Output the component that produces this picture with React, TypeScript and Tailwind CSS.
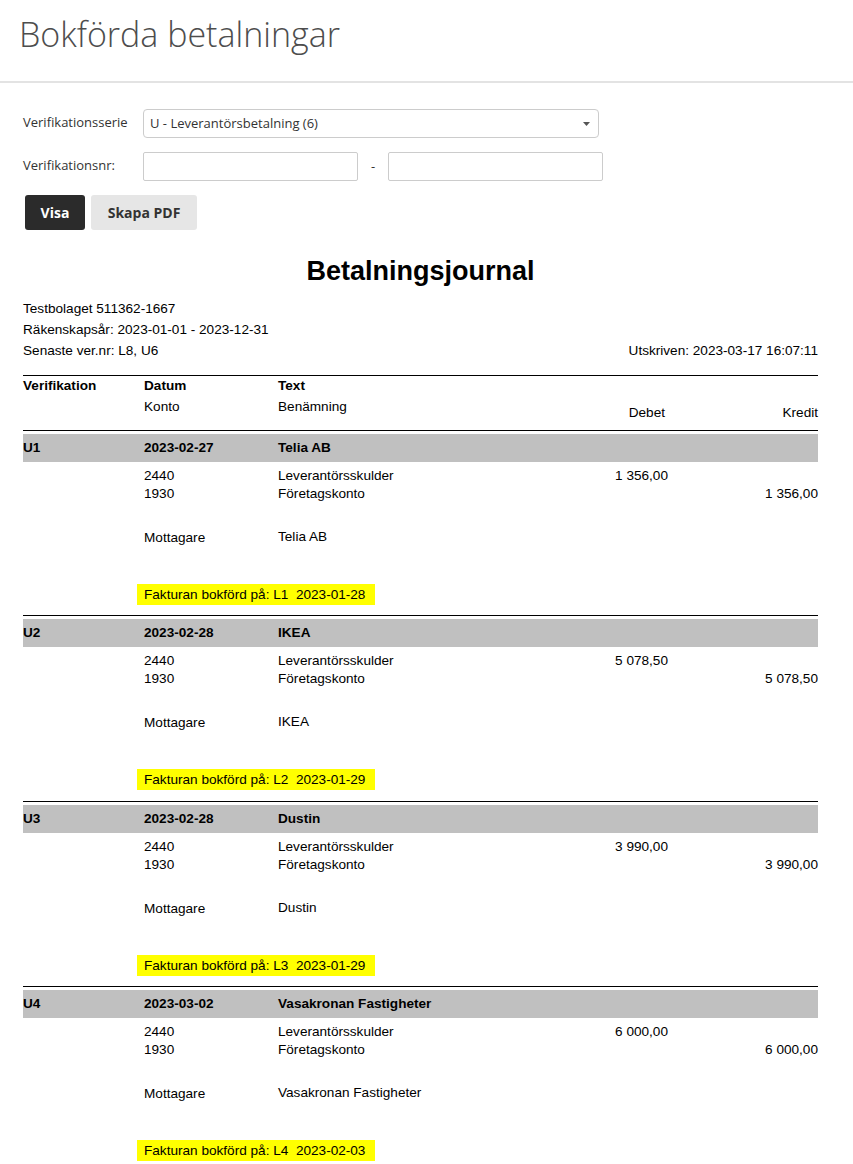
import React from "react";

type Voucher = {
  id: string;
  date: string;
  name: string;
  amount: string;
  invoice: string;
  invoiceDate: string;
};

const vouchers: Voucher[] = [
  { id: "U1", date: "2023-02-27", name: "Telia AB", amount: "1 356,00", invoice: "L1", invoiceDate: "2023-01-28" },
  { id: "U2", date: "2023-02-28", name: "IKEA", amount: "5 078,50", invoice: "L2", invoiceDate: "2023-01-29" },
  { id: "U3", date: "2023-02-28", name: "Dustin", amount: "3 990,00", invoice: "L3", invoiceDate: "2023-01-29" },
  { id: "U4", date: "2023-03-02", name: "Vasakronan Fastigheter", amount: "6 000,00", invoice: "L4", invoiceDate: "2023-02-03" },
];

const cols = "grid grid-cols-[121px_134px_240px_150px_150px]";

function VoucherBlock({ v }: { v: Voucher }) {
  return (
    <div className="border-t border-black pb-[10px]">
      <div className={`${cols} mt-[3px] h-[28px] items-center bg-[#c0c0c0] font-bold`}>
        <div>{v.id}</div>
        <div>{v.date}</div>
        <div>{v.name}</div>
      </div>
      <div className="pt-[5px] leading-[18px]">
        <div className={cols}>
          <div />
          <div>2440</div>
          <div>Leverantörsskulder</div>
          <div className="text-right">{v.amount}</div>
          <div />
        </div>
        <div className={cols}>
          <div />
          <div>1930</div>
          <div>Företagskonto</div>
          <div />
          <div className="text-right">{v.amount}</div>
        </div>
      </div>
      <div className={`${cols} mt-[26px] leading-[18px]`}>
        <div />
        <div>Mottagare</div>
        <div className="-mt-[1px]">{v.name}</div>
      </div>
      <div className={`${cols} mt-[37px]`}>
        <div />
        <div className="col-span-3">
          <span className="-ml-[7px] inline-block h-[21px] whitespace-pre bg-[#ffff00] pl-[7px] pr-[10px] leading-[21px]">
            {`Fakturan bokförd på: ${v.invoice}  ${v.invoiceDate}`}
          </span>
        </div>
      </div>
    </div>
  );
}

export default function App() {
  return (
    <div className="min-h-[1164px] w-[853px] bg-white">
      <header className="border-b-2 border-[#e3e3e3] px-[19px] pb-[27px] pt-[14px]">
        <h1 className="font-['Open_Sans',sans-serif] text-[34px] font-light leading-[40px] text-[#4d4d4d]">
          Bokförda betalningar
        </h1>
      </header>

      <section className="pl-[23px] pt-[26px] font-['Open_Sans',sans-serif] text-[13px] text-[#333]">
        <div className="flex items-center">
          <label className="w-[120px] -mt-[2px]">Verifikationsserie</label>
          <div className="flex h-[29px] w-[456px] items-center justify-between rounded-[4px] border border-[#ccc] pl-[6px] pr-[8px]">
            <span>U - Leverantörsbetalning (6)</span>
            <svg width="7" height="4" viewBox="0 0 7 4" className="mt-[1px]">
              <path d="M0 0h7L3.5 4z" fill="#555" />
            </svg>
          </div>
        </div>
        <div className="mt-[14px] flex items-center">
          <label className="w-[120px] -mt-[2px]">Verifikationsnr:</label>
          <div className="h-[29px] w-[215px] rounded-[2px] border border-[#ccc]" />
          <span className="w-[30px] text-center">-</span>
          <div className="h-[29px] w-[215px] rounded-[2px] border border-[#ccc]" />
        </div>
        <div className="mt-[14px] flex gap-[6px] pl-[2px]">
          <button className="h-[35px] w-[60px] rounded-[3px] bg-[#2b2b2b] text-[14px] font-bold text-white">
            Visa
          </button>
          <button className="h-[35px] w-[106px] rounded-[3px] bg-[#e6e6e6] text-[14px] font-bold text-[#333]">
            Skapa PDF
          </button>
        </div>
      </section>

      <section className="ml-[23px] w-[795px] pb-[20px] font-['Liberation_Sans',Arial,sans-serif] text-[13.6px] text-black">
        <h2 className="mt-[26px] text-center text-[27px] font-bold leading-[30px]">Betalningsjournal</h2>

        <div className="mt-[12px] leading-[21px]">
          <div>Testbolaget 511362-1667</div>
          <div>Räkenskapsår: 2023-01-01 - 2023-12-31</div>
          <div className="flex justify-between">
            <span>Senaste ver.nr: L8, U6</span>
            <span>Utskriven: 2023-03-17 16:07:11</span>
          </div>
        </div>

        <div className={`${cols} mt-[14px] h-[55px] border-t border-black pt-[1px] leading-[18px]`}>
          <div className="font-bold">Verifikation</div>
          <div>
            <div className="font-bold">Datum</div>
            <div className="mt-[3px]">Konto</div>
          </div>
          <div>
            <div className="font-bold">Text</div>
            <div className="mt-[3px]">Benämning</div>
          </div>
          <div className="pr-[3px] pt-[27px] text-right">Debet</div>
          <div className="pt-[27px] text-right">Kredit</div>
        </div>

        {vouchers.map((v) => (
          <VoucherBlock key={v.id} v={v} />
        ))}
      </section>
    </div>
  );
}
